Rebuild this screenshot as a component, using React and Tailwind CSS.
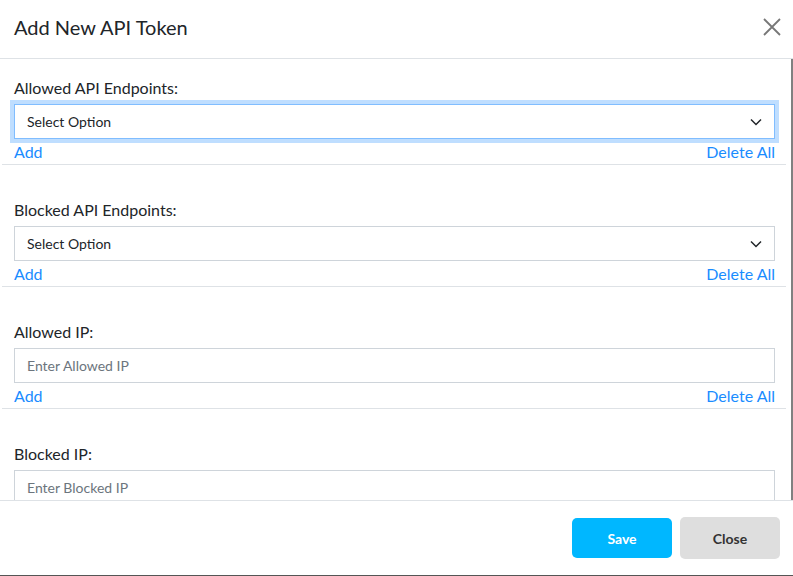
import React from "react";

const sections = [
    { label: "Allowed API Endpoints:", kind: "select", focused: true },
    { label: "Blocked API Endpoints:", kind: "select" },
    { label: "Allowed IP:", kind: "input", placeholder: "Enter Allowed IP" },
    { label: "Blocked IP:", kind: "input", placeholder: "Enter Blocked IP" },
];

const Chevron = () => (
    <svg width="12" height="8" viewBox="0 0 12 8" fill="none">
        <path d="M1 1.5L6 6.5L11 1.5" stroke="#212529" strokeWidth="1.5" />
    </svg>
);

const Field = ({ section }) => {
    if (section.kind === "select") {
        return (
            <div
                className={
                    "flex h-[35px] items-center justify-between border bg-white pl-[12px] pr-[12px] text-[14px] text-[#212529] " +
                    (section.focused ? "border-[#80bdff] shadow-[0_0_0_4px_rgba(0,123,255,0.25)]" : "border-[#ced4da]")
                }
            >
                <span>Select Option</span>
                <Chevron />
            </div>
        );
    }
    return (
        <div className="flex h-[35px] items-center border border-[#ced4da] bg-white pl-[12px] text-[14px] text-[#6c757d]">
            {section.placeholder}
        </div>
    );
};

const App = () => {
    return (
        <div className="flex h-[576px] w-[793px] flex-col overflow-hidden border-b border-[#555] bg-white font-['Lato',sans-serif] text-[#212529]">
            {/* header */}
            <div className="flex h-[59px] shrink-0 items-center justify-between border-b border-[#dee2e6] pb-[4px] pl-[14px] pr-[12px]">
                <div className="text-[20px] leading-none">Add New API Token</div>
                <svg width="18" height="18" viewBox="0 0 18 18" fill="none">
                    <path d="M1 1L17 17M17 1L1 17" stroke="#777" strokeWidth="1.8" />
                </svg>
            </div>

            {/* body */}
            <div className="flex min-h-0 flex-1">
                <div className="flex-1 overflow-hidden">
                    {sections.map((s, i) => (
                        <div key={s.label} className={i > 0 ? "mt-[16px]" : ""}>
                            <div className="pl-[14px] pr-[16px] pt-[18px]">
                                <div className="h-[22px] text-[16px] leading-[22px]">{s.label}</div>
                                <div className="mt-[5px]">
                                    <Field section={s} />
                                </div>
                                <div className="flex h-[25px] items-center justify-between text-[16px] text-[#1a8cff]">
                                    <span>Add</span>
                                    <span>Delete All</span>
                                </div>
                            </div>
                            <div className="ml-[2px] mr-[5px] h-px bg-[#dee2e6]" />
                        </div>
                    ))}
                </div>
                <div className="w-[2px] shrink-0 bg-[#808080]" />
            </div>

            {/* footer */}
            <div className="flex h-[75px] shrink-0 items-center justify-end gap-[8px] border-t border-[#dee2e6] pr-[13px]">
                <button className="h-[40px] w-[100px] rounded-[5px] bg-[#00b7ff] text-[14px] font-bold text-white">Save</button>
                <button className="h-[42px] w-[100px] rounded-[5px] bg-[#dedede] text-[14px] font-bold text-[#333]">Close</button>
            </div>
        </div>
    );
};

export default App;
